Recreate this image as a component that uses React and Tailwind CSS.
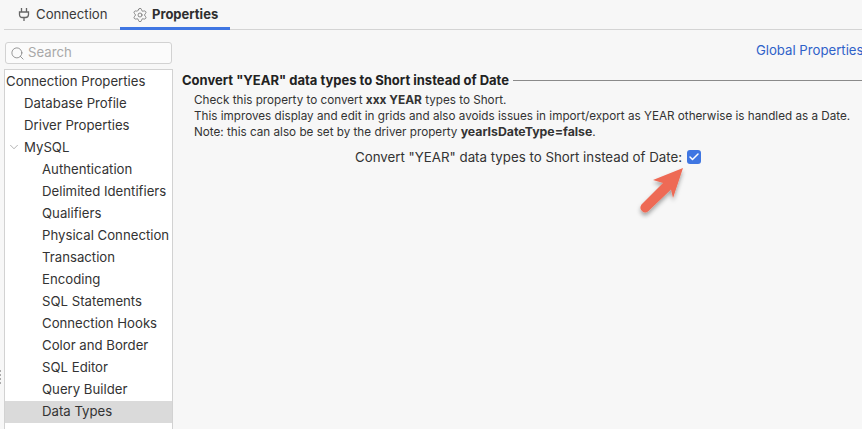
import React from "react";
import { Settings, Search, ChevronDown, Check } from "lucide-react";

const items = [
  ["Connection Properties", 0],
  ["Database Profile", 1],
  ["Driver Properties", 1],
  ["MySQL", 1, true],
  ["Authentication", 2],
  ["Delimited Identifiers", 2],
  ["Qualifiers", 2],
  ["Physical Connection", 2],
  ["Transaction", 2],
  ["Encoding", 2],
  ["SQL Statements", 2],
  ["Connection Hooks", 2],
  ["Color and Border", 2],
  ["SQL Editor", 2],
  ["Query Builder", 2],
  ["Data Types", 2, false, true],
];

function Row({ label, level, chevron, selected }) {
  const pad = level === 0 ? "pl-px" : level === 1 ? "pl-[19px]" : "pl-[37px]";
  return (
    <div className={`relative h-[22px] leading-[21px] whitespace-nowrap ${pad} ${selected ? "bg-[#dadada]" : ""}`}>
      {chevron && <ChevronDown className="absolute left-[2px] top-[3px] w-[14px] h-[14px] text-[#888]" strokeWidth={1.1} />}
      {label}
    </div>
  );
}

export default function App() {
  return (
    <div className="w-[862px] h-[429px] overflow-hidden bg-[#f7f7f7] text-[#2f2f2f] text-[13px] flex flex-col relative" style={{ fontFamily: "Inter, sans-serif" }}>
      <div className="h-[30px] shrink-0 ml-1 border-b border-[#d4d4d4] flex items-stretch">
        <div className="flex items-center gap-[5px] pl-[13px] w-[116px] h-[29px]">
          <svg width="14" height="15" viewBox="0 0 14 15" fill="none" stroke="#666" strokeWidth="1.3">
            <path d="M4.500 1V5M9.500 1V5M2.500 5H11.500V7.500Q11.500 10.500 8.500 10.500H5.500Q2.500 10.500 2.500 7.500ZM7 10.500V14" />
          </svg>
          <span className="text-[#3a3a3a] text-[13.2px]">Connection</span>
        </div>
        <div className="flex items-center gap-[4px] pl-[12px] w-[110px] h-[30px] border-b-[3px] border-[#3f76e2] pt-[2px]">
          <Settings className="w-[16px] h-[16px] text-[#666]" strokeWidth={1.1} />
          <span className="font-bold">Properties</span>
        </div>
      </div>
      <div className="flex flex-1 min-h-0 pl-[5px] pt-[12px]">
        <div className="w-[168px] shrink-0 flex flex-col">
          <div className="w-[167px] h-[22px] bg-[#fbfbfb] border border-[#d2d2d2] rounded-[3px] flex items-center pl-[4px] gap-[3px] text-[#a8a8a8] text-[13.2px]">
            <Search className="w-[15px] h-[15px] text-[#777]" strokeWidth={1.2} />
            <span>Search</span>
          </div>
          <div className="mt-[5px] flex-1 bg-white border-x border-t border-[#d2d2d2] -ml-px w-[169px] text-[13.2px] text-[#333] pt-px">
            {items.map(([l, lv, c, s]) => <Row key={l} label={l} level={lv} chevron={c} selected={s} />)}
          </div>
        </div>
        <div className="flex-1 min-w-0 pl-[9px]">
          <div className="flex justify-end h-[31px] -mr-[1.500px] text-[#2f62c9] leading-[16px] text-[13.2px] whitespace-nowrap">Global Properties</div>
          <div className="flex items-center gap-[4px] h-[16px] font-bold text-[#222] whitespace-nowrap">
            <span>Convert "YEAR" data types to Short instead of Date</span>
            <div className="flex-1 h-px bg-[#8a8a8a] -mt-[2px]" />
          </div>
          <div className="pl-[12px] mt-[3px] text-[11.7px] leading-[15.500px] whitespace-nowrap text-[#333]">
            <div>Check this property to convert <b className="text-[11.9px]">xxx YEAR</b> types to Short.</div>
            <div>This improves display and edit in grids and also avoids issues in import/export as YEAR otherwise is handled as a Date.</div>
            <div>Note: this can also be set by the driver property <b className="text-[12.3px]">yearIsDateType=false</b>.</div>
          </div>
          <div className="mt-[7px] pl-[173px] flex items-center gap-[5px] whitespace-nowrap text-[13.3px] text-[#333]">
            <span>Convert "YEAR" data types to Short instead of Date:</span>
            <span className="w-[14px] h-[14px] rounded-[3px] bg-[#3f76e2] flex items-center justify-center">
              <Check className="w-[12px] h-[12px] text-white" strokeWidth={3} />
            </span>
          </div>
        </div>
      </div>
      <svg className="absolute left-[630px] top-[160px]" width="60" height="60" viewBox="0 0 60 60">
        <defs>
          <filter id="s" x="-30%" y="-30%" width="170%" height="170%">
            <feDropShadow dx="0" dy="3" stdDeviation="2" floodColor="#000" floodOpacity="0.35" />
          </filter>
        </defs>
        <path d="M53 8 L23 20 L33 23 L11.500 44.500 Q9 48 12 51 Q15 54 18.500 51 L41 29.500 L43 38 Z" fill="#ee6a55" filter="url(#s)" />
      </svg>
      <div className="absolute left-0 top-[370px] flex flex-col gap-[2px]">
        {[0, 1, 2, 3].map((i) => <div key={i} className="w-px h-[2px] bg-[#aaa]" />)}
      </div>
    </div>
  );
}
